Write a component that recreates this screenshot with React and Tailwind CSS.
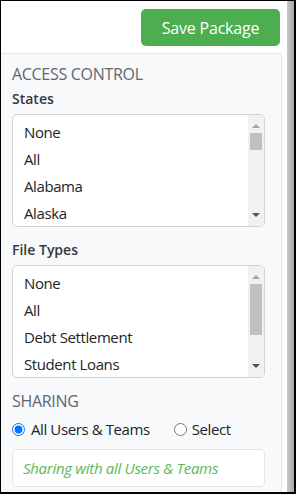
import { useState } from "react";

const STATES = ["None", "All", "Alabama", "Alaska"];
const FILE_TYPES = ["None", "All", "Debt Settlement", "Student Loans"];

function ListBox({ items, thumbTop, thumbHeight }) {
  return (
    <div className="flex h-[113px] rounded-[5px] border border-[#cfd3d8] bg-white overflow-hidden">
      <div className="flex-1 pt-[4px] pl-[11px]">
        {items.map((item) => (
          <div key={item} className="h-[27px] flex items-center text-[15px] tracking-[-0.4px] text-[#212529]">
            {item}
          </div>
        ))}
      </div>
      {/* fake scrollbar */}
      <div className="w-[16px] bg-[#f1f1f1] flex flex-col items-center">
        <div className="h-[17px] flex items-end justify-center pb-[4px]">
          <div className="w-0 h-0 border-l-[4px] border-r-[4px] border-b-[4px] border-l-transparent border-r-transparent border-b-[#a3a3a3]" />
        </div>
        <div className="flex-1 w-full px-[2px]">
          <div className="w-full bg-[#c1c1c1]" style={{ marginTop: thumbTop, height: thumbHeight }} />
        </div>
        <div className="h-[17px] flex items-start justify-center pt-[4px]">
          <div className="w-0 h-0 border-l-[4px] border-r-[4px] border-t-[4px] border-l-transparent border-r-transparent border-t-[#505050]" />
        </div>
      </div>
    </div>
  );
}

export default function App() {
  const [share, setShare] = useState("all");

  return (
    <div className="w-[296px] h-[494px] bg-white border-t border-l border-b-2 border-r-2 border-black flex font-['Open_Sans',sans-serif] overflow-hidden">
      <div className="w-[281px] flex flex-col">
        {/* Header */}
        <div className="h-[52px] flex justify-end items-start pt-[8px] pr-[2px]">
          <button className="h-[37px] w-[139px] rounded-[5px] bg-[#4cae4f] text-white text-[16px] tracking-[-0.2px]">
            Save Package
          </button>
        </div>

        {/* Panel */}
        <div className="flex-1 bg-[#f8f9fa] border-t border-r border-[#e3e6ea] pl-[11px] pr-[16px]">
          <div className="mt-[8px] text-[16px] text-[#5f6670] uppercase leading-6 tracking-[-0.3px]">Access Control</div>
          <div className="mt-[3px] text-[14px] font-semibold text-[#343a40] leading-5">States</div>
          <div className="mt-[5px]">
            <ListBox items={STATES} thumbTop={1} thumbHeight={17} />
          </div>

          <div className="mt-[13px] text-[14px] font-semibold text-[#343a40] leading-5">File Types</div>
          <div className="mt-[5px]">
            <ListBox items={FILE_TYPES} thumbTop={1} thumbHeight={51} />
          </div>

          <div className="mt-[11px] text-[16px] text-[#5f6670] uppercase leading-6 tracking-[-0.3px]">Sharing</div>
          <div className="mt-[5px] h-[22px] flex items-center text-[15px] tracking-[-0.4px] text-[#212529]">
            <label className="flex items-center gap-[6px]">
              <input
                type="radio"
                name="share"
                checked={share === "all"}
                onChange={() => setShare("all")}
                className="w-[13px] h-[13px]"
              />
              All Users &amp; Teams
            </label>
            <label className="flex items-center gap-[5px] ml-[24px]">
              <input
                type="radio"
                name="share"
                checked={share === "select"}
                onChange={() => setShare("select")}
                className="w-[13px] h-[13px]"
              />
              Select
            </label>
          </div>
          <div className="mt-[9px] h-[38px] rounded-[5px] border border-[#e3e6ea] bg-white flex items-center pl-[10px] text-[15px] tracking-[-0.3px] italic text-[#5cb85c]">
            Sharing with all Users &amp; Teams
          </div>
        </div>
      </div>

      {/* window edge */}
      <div className="w-[5px] bg-white" />
      <div className="w-[7px] bg-gradient-to-r from-[#c8c8c8] to-[#a8a8a8]" />
    </div>
  );
}
